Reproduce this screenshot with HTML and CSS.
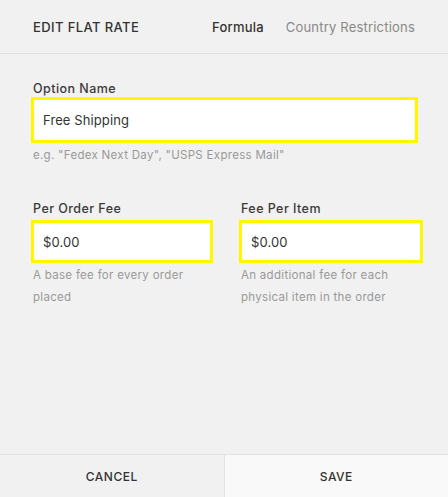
FILE: index.html
```html
<!DOCTYPE html>
<html lang="en">
<head>
  <meta charset="UTF-8">
  <title>Edit Flat Rate</title>
  <link rel="stylesheet" href="styles.css">
</head>
<body>
  <div class="panel">
    <!-- Header -->
    <header class="panel-header">
      <h1 class="panel-title">Edit Flat Rate</h1>
      <nav class="tabs">
        <span class="tab active">Formula</span>
        <span class="tab">Country Restrictions</span>
      </nav>
    </header>

    <!-- Form -->
    <main class="panel-body">
      <div class="field">
        <label class="field-label">Option Name</label>
        <div class="field-input">Free Shipping</div>
        <p class="field-help">e.g. "Fedex Next Day", "USPS Express Mail"</p>
      </div>

      <div class="field-row">
        <div class="field">
          <label class="field-label">Per Order Fee</label>
          <div class="field-input">$0.00</div>
          <p class="field-help">A base fee for every order placed</p>
        </div>
        <div class="field">
          <label class="field-label">Fee Per Item</label>
          <div class="field-input">$0.00</div>
          <p class="field-help">An additional fee for each physical item in the order</p>
        </div>
      </div>
    </main>

    <!-- Footer buttons -->
    <footer class="panel-footer">
      <button class="btn btn-cancel">Cancel</button>
      <button class="btn btn-save">Save</button>
    </footer>
  </div>
</body>
</html>
```

FILE: styles.css
```css
body {
  margin: 0;
  font-family: Inter, "Open Sans", Arial, sans-serif;
  background-color: #f1f1f1;
  color: #333;
}

.panel {
  display: flex;
  flex-direction: column;
  height: 497px;
  width: 448px;
}

.panel-header {
  display: flex;
  align-items: center;
  justify-content: space-between;
  height: 54px;
  padding: 0 33px;
  border-bottom: 1px solid #e2e2e2;
  box-sizing: border-box;
}

.panel-title {
  margin: 0;
  font-size: 13px;
  font-weight: 500;
  letter-spacing: 0.4px;
  text-transform: uppercase;
  color: #333;
}

.tabs {
  display: flex;
  gap: 22px;
  font-size: 13px;
  letter-spacing: 0.2px;
}

.tab {
  color: #888;
}

.tab.active {
  color: #333;
  font-weight: 500;
}

.panel-body {
  flex: 1;
  padding: 26px 30px 0 31px;
}

.field-label {
  display: block;
  height: 17px;
  line-height: 17px;
  font-size: 12.5px;
  font-weight: 500;
  letter-spacing: 0.45px;
  color: #3a3a3a;
  padding-left: 2px;
}

.field-input {
  height: 46px;
  box-sizing: border-box;
  border: 3px solid #fff700;
  background-color: #fff;
  padding: 0 9px;
  display: flex;
  align-items: center;
  font-size: 13px;
  letter-spacing: 0.1px;
  color: #333;
}

.field-help {
  margin: 1px 0 0;
  padding-left: 2px;
  font-size: 11.5px;
  line-height: 22px;
  letter-spacing: 0.3px;
  color: #999;
}

.field-row {
  display: grid;
  grid-template-columns: 182px 184px;
  gap: 26px;
  margin-top: 34px;
}

.field-row .field-label {
  margin-bottom: 3px;
}

.field-row .field-input {
  height: 43px;
}

.panel-footer {
  display: flex;
  height: 42px;
  border-top: 1px solid #e2e2e2;
}

.btn {
  flex: 1;
  border: none;
  font-family: inherit;
  font-size: 12px;
  font-weight: 500;
  letter-spacing: 0.5px;
  text-transform: uppercase;
  color: #333;
  cursor: pointer;
}

.btn-cancel {
  background-color: #f1f1f1;
}

.btn-save {
  background-color: #f9f9f9;
  border-left: 1px solid #e2e2e2;
}
```
